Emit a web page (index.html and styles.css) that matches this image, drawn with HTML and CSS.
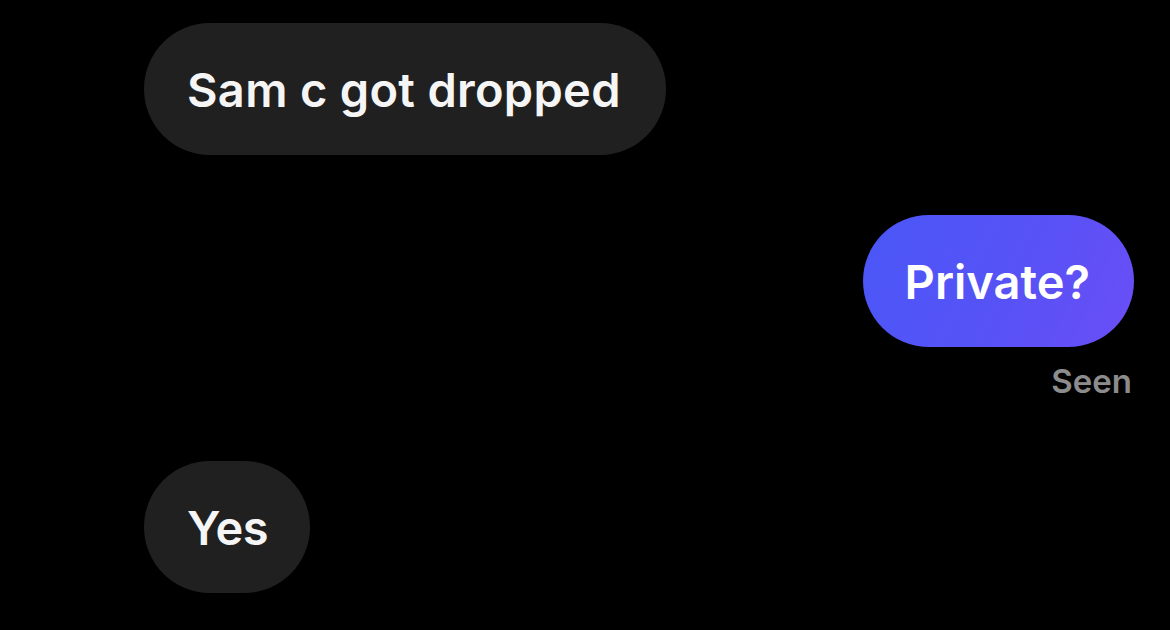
FILE: index.html
```html
<!DOCTYPE html>
<html>
<head>
<meta charset="utf-8">
<link rel="stylesheet" href="styles.css">
</head>
<body>
<div class="chat">
  <div class="row in first"><div class="bubble gray">Sam c got dropped</div></div>
  <div class="row out"><div class="bubble blue">Private?</div><div class="seen">Seen</div></div>
  <div class="row in last"><div class="bubble gray short">Yes</div></div>
</div>
</body>
</html>
```
FILE: styles.css
```css
html, body {
  margin: 0;
  padding: 0;
  background: #000;
  width: 1170px;
  height: 630px;
  overflow: hidden;
}
.chat {
  display: flex;
  flex-direction: column;
  padding: 23px 36px 0 144px;
  font-family: Inter, "Noto Sans", sans-serif;
}
.row {
  display: flex;
  flex-direction: column;
}
.row.in { align-items: flex-start; }
.row.out { align-items: flex-end; margin-top: 60px; }
.row.last { margin-top: 60px; }
.bubble {
  height: 132px;
  border-radius: 66px;
  padding: 0 45px 0 43px;
  display: flex;
  align-items: center;
  font-size: 47px;
  font-weight: 600;
  color: #f5f5f5;
  box-sizing: border-box;
  letter-spacing: 0.3px;
}
.gray { background: #202020; }
.short { padding: 0 42px 0 43px; letter-spacing: -0.5px; }
.blue {
  background: linear-gradient(115deg, #4a57f7 0%, #5752f6 55%, #6b4ef6 100%);
  color: #fff;
  padding: 0 44px 0 42px;
  letter-spacing: 0;
}
.seen {
  margin-top: 14px;
  font-size: 33px;
  font-weight: 600;
  color: #8c8c8c;
  line-height: 40px;
  margin-right: 2px;
}
```
